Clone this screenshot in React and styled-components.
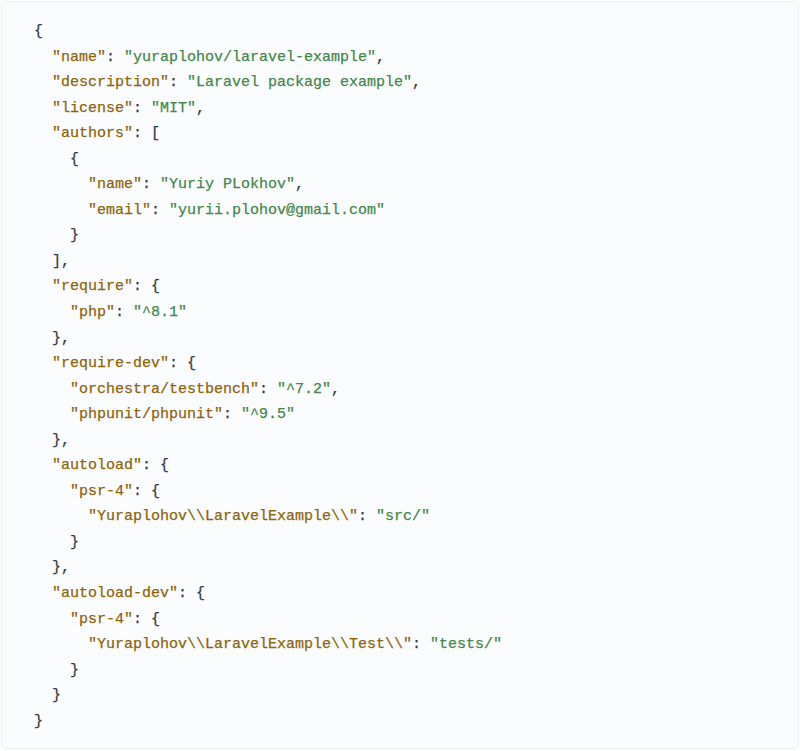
import React from "react";
import styled, { createGlobalStyle } from "styled-components";

const Global = createGlobalStyle`
  html, body { margin: 0; padding: 0; background: #ffffff; }
  #root { min-height: 751px; }
`;

const Page = styled.div`
  padding: 1px 1px 0 1px;
`;

const Panel = styled.div`
  background: #fbfcfd;
  border: 1px solid #eceef1;
  border-radius: 6px;
  padding: 17px 32px 13px 32px;
  box-sizing: border-box;
  height: 748px;
`;

const Code = styled.pre`
  margin: 0;
  font-family: "Liberation Mono", "DejaVu Sans Mono", monospace;
  font-size: 15px;
  line-height: 25.55px;
  color: #36393e;
  -webkit-text-stroke: 0.25px currentColor;
`;

const Line = styled.div`
  padding-left: ${(p) => p.$indent * 18}px;
  white-space: pre;
`;

const Key = styled.span`
  color: #8c640c;
`;

const Str = styled.span`
  color: #43874a;
`;

const Punc = styled.span`
  color: #36393e;
`;

const lines = [
  [0, [["p", "{"]]],
  [1, [["k", '"name"'], ["p", ": "], ["s", '"yuraplohov/laravel-example"'], ["p", ","]]],
  [1, [["k", '"description"'], ["p", ": "], ["s", '"Laravel package example"'], ["p", ","]]],
  [1, [["k", '"license"'], ["p", ": "], ["s", '"MIT"'], ["p", ","]]],
  [1, [["k", '"authors"'], ["p", ": ["]]],
  [2, [["p", "{"]]],
  [3, [["k", '"name"'], ["p", ": "], ["s", '"Yuriy PLokhov"'], ["p", ","]]],
  [3, [["k", '"email"'], ["p", ": "], ["s", '"yurii.plohov@gmail.com"']]],
  [2, [["p", "}"]]],
  [1, [["p", "],"]]],
  [1, [["k", '"require"'], ["p", ": {"]]],
  [2, [["k", '"php"'], ["p", ": "], ["s", '"^8.1"']]],
  [1, [["p", "},"]]],
  [1, [["k", '"require-dev"'], ["p", ": {"]]],
  [2, [["k", '"orchestra/testbench"'], ["p", ": "], ["s", '"^7.2"'], ["p", ","]]],
  [2, [["k", '"phpunit/phpunit"'], ["p", ": "], ["s", '"^9.5"']]],
  [1, [["p", "},"]]],
  [1, [["k", '"autoload"'], ["p", ": {"]]],
  [2, [["k", '"psr-4"'], ["p", ": {"]]],
  [3, [["k", '"Yuraplohov\\\\LaravelExample\\\\"'], ["p", ": "], ["s", '"src/"']]],
  [2, [["p", "}"]]],
  [1, [["p", "},"]]],
  [1, [["k", '"autoload-dev"'], ["p", ": {"]]],
  [2, [["k", '"psr-4"'], ["p", ": {"]]],
  [3, [["k", '"Yuraplohov\\\\LaravelExample\\\\Test\\\\"'], ["p", ": "], ["s", '"tests/"']]],
  [2, [["p", "}"]]],
  [1, [["p", "}"]]],
  [0, [["p", "}"]]],
];

const Token = ({ type, text }) => {
  if (type === "k") return <Key>{text}</Key>;
  if (type === "s") return <Str>{text}</Str>;
  return <Punc>{text}</Punc>;
};

export default function App() {
  return (
    <Page>
      <Global />
      <Panel>
        <Code>
          {lines.map(([indent, tokens], i) => (
            <Line key={i} $indent={indent}>
              {tokens.map(([t, text], j) => (
                <Token key={j} type={t} text={text} />
              ))}
            </Line>
          ))}
        </Code>
      </Panel>
    </Page>
  );
}
